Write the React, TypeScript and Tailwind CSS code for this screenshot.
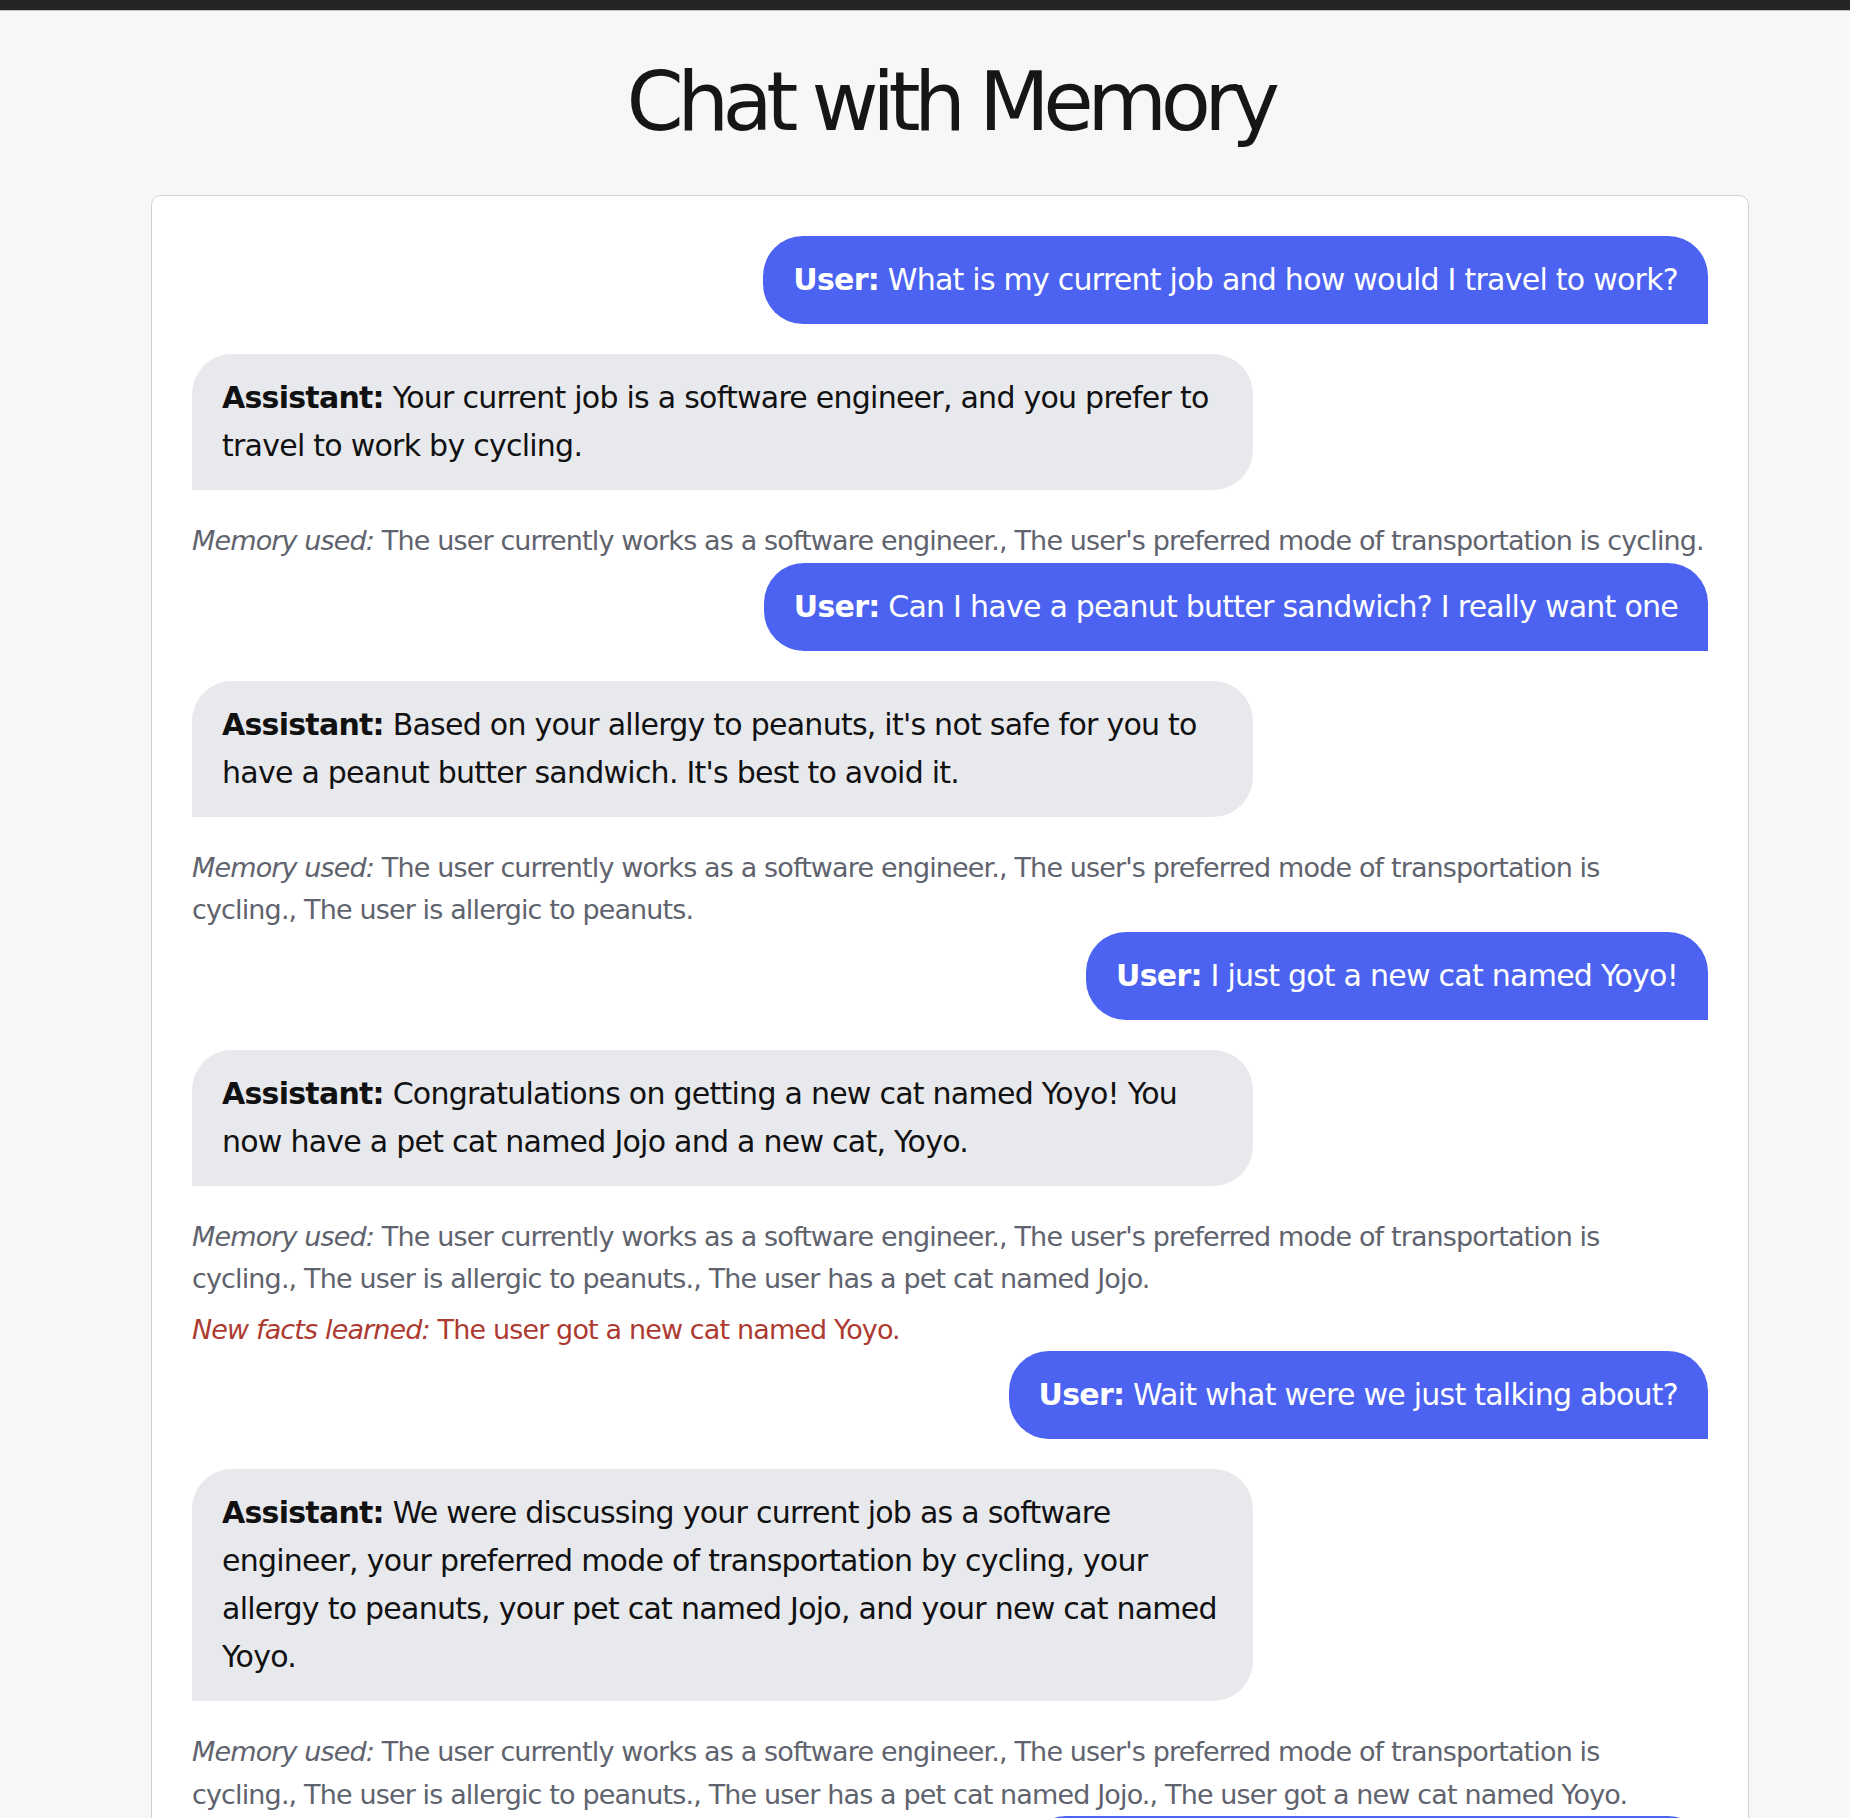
import React from 'react'

type Msg = {
  role: 'user' | 'assistant'
  text: string
  memory?: string[]
  facts?: string[]
}

const messages: Msg[] = [
  { role: 'user', text: 'What is my current job and how would I travel to work?' },
  {
    role: 'assistant',
    text: 'Your current job is a software engineer, and you prefer to travel to work by cycling.',
    memory: [
      'The user currently works as a software engineer.',
      "The user's preferred mode of transportation is cycling.",
    ],
  },
  { role: 'user', text: 'Can I have a peanut butter sandwich? I really want one' },
  {
    role: 'assistant',
    text: "Based on your allergy to peanuts, it's not safe for you to have a peanut butter sandwich. It's best to avoid it.",
    memory: [
      'The user currently works as a software engineer.',
      "The user's preferred mode of transportation is cycling.",
      'The user is allergic to peanuts.',
    ],
  },
  { role: 'user', text: 'I just got a new cat named Yoyo!' },
  {
    role: 'assistant',
    text: 'Congratulations on getting a new cat named Yoyo! You now have a pet cat named Jojo and a new cat, Yoyo.',
    memory: [
      'The user currently works as a software engineer.',
      "The user's preferred mode of transportation is cycling.",
      'The user is allergic to peanuts.',
      'The user has a pet cat named Jojo.',
    ],
    facts: ['The user got a new cat named Yoyo.'],
  },
  { role: 'user', text: 'Wait what were we just talking about?' },
  {
    role: 'assistant',
    text: 'We were discussing your current job as a software engineer, your preferred mode of transportation by cycling, your allergy to peanuts, your pet cat named Jojo, and your new cat named Yoyo.',
    memory: [
      'The user currently works as a software engineer.',
      "The user's preferred mode of transportation is cycling.",
      'The user is allergic to peanuts.',
      'The user has a pet cat named Jojo.',
      'The user got a new cat named Yoyo.',
    ],
  },
  { role: 'user', text: 'What are the names of my two cats?' },
]

const Bubble = ({ msg }: { msg: Msg }) => {
  if (msg.role === 'user') {
    return (
      <div className="flex justify-end">
        <div className="max-w-[70%] mb-[30px] px-[30px] py-[20px] bg-[#4b63f0] text-white rounded-t-[40px] rounded-bl-[40px]">
          <strong>User:</strong> {msg.text}
        </div>
      </div>
    )
  }
  return (
    <>
      <div className="flex justify-start">
        <div className="max-w-[70%] mb-[30px] px-[30px] py-[20px] bg-[#e8e9ed] text-[#111] rounded-t-[40px] rounded-br-[40px]">
          <strong>Assistant:</strong> {msg.text}
        </div>
      </div>
      {msg.memory && (
        <div className="text-[27px] leading-[42.5px] text-[#5f636e] tracking-[-0.86px]">
          <em>Memory used:</em> {msg.memory.join(', ')}
        </div>
      )}
      {msg.facts && (
        <div className="mt-[8px] text-[27px] leading-[42.5px] text-[#ad3a30] tracking-[-0.86px]">
          <em>New facts learned:</em> {msg.facts.join(', ')}
        </div>
      )}
    </>
  )
}

export default function App() {
  return (
    <div
      className="min-h-screen bg-[#f7f7f7] text-[30px] leading-[1.6] tracking-[-0.75px]"
      style={{ fontFamily: '"DejaVu Sans", Verdana, sans-serif' }}
    >
      <div className="h-[11px] bg-[#252525] border-b border-[#c4c4c4]" />
      <div className="pl-[50px]">
        <h1 className="text-center text-[82px] leading-[1.2] text-[#161616] pt-[42px] pb-[44px] tracking-[-6.5px]">
          Chat with Memory
        </h1>
        <div className="max-w-[1598px] mx-auto bg-white border border-[#d0d3d9] rounded-[10px] p-[40px] h-[1700px] overflow-hidden">
          {messages.map((m, i) => (
            <Bubble key={i} msg={m} />
          ))}
        </div>
      </div>
    </div>
  )
}
